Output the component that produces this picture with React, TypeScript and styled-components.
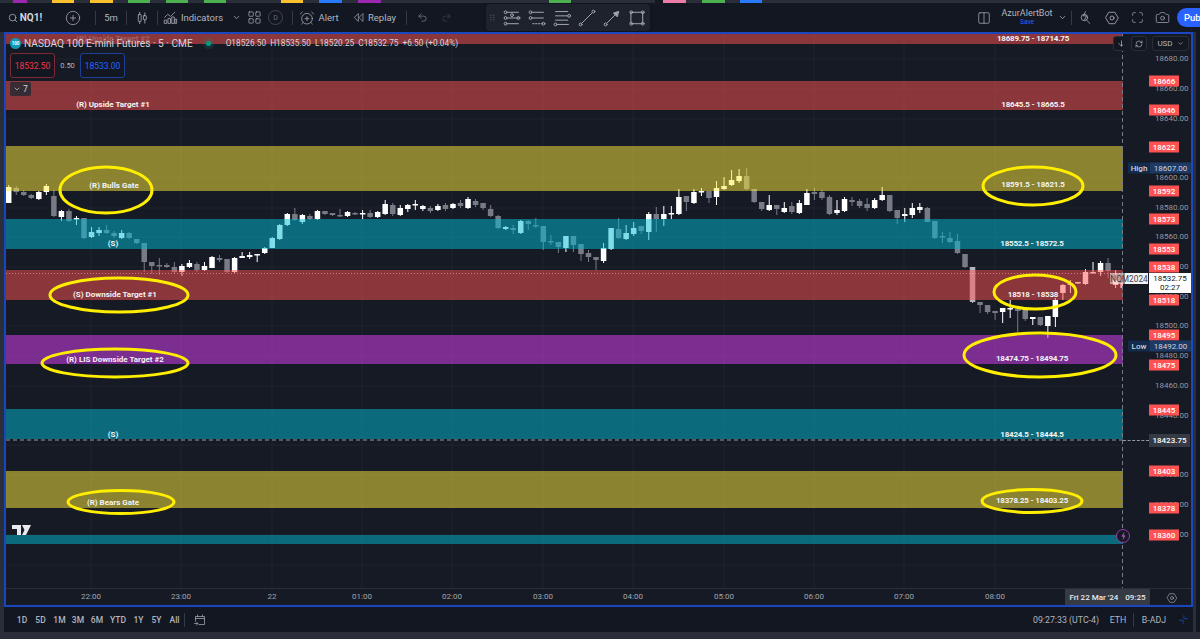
import React from "react";
import styled, { createGlobalStyle } from "styled-components";
import { Search, CirclePlus, LayoutGrid, AlarmClockPlus, Undo2, Redo2, ChevronDown, Maximize, Camera, Columns2, ArrowDown, RefreshCw } from "lucide-react";

const Global = createGlobalStyle`
  html, body { margin: 0; padding: 0; width: 1200px; height: 639px; overflow: hidden; background: #2a2e39; }
  * { box-sizing: border-box; }
  body { font-family: Roboto, "Liberation Sans", sans-serif; color: #d1d4dc; }
`;

const Page = styled.div`
  width: 1200px; height: 639px; display: flex; flex-direction: column; overflow: hidden; background: #2a2e39;
`;
const TabStrip = styled.div`display: flex; height: 3px; flex: none;`;
const TabMark = styled.div<{ $w: number; $c: string }>`
  width: ${p => p.$w}px; background: ${p => p.$c}; flex: none;
`;
const Toolbar = styled.header`
  position: relative; display: flex; align-items: center; height: 29px; flex: none; background: #131722; color: #b2b5be; overflow: hidden;
`;
const Cell = styled.div<{ $w: number; $gap?: number }>`
  width: ${p => p.$w}px; flex: none; height: 100%; display: flex; align-items: center; justify-content: center;
  gap: ${p => p.$gap ?? 3}px; color: #b2b5be; font-size: 9.5px;
`;
const Symbol = styled.span`color: #d1d4dc; font-size: 10px; font-weight: 700;`;
const Divider = styled.span`width: 1px; height: 14px; background: #363a45; flex: none;`;
const DayBadge = styled.span`
  width: 15px; height: 15px; border: 1px solid #434651; border-radius: 50%; font-size: 7px; color: #6a6d78;
  display: flex; align-items: center; justify-content: center;
`;
const Spring = styled.div`flex: 1;`;
const Floating = styled.div`
  position: absolute; left: 486px; top: 1px; width: 164px; height: 27px; background: #1e222d; border-radius: 4px;
  display: flex; align-items: center; padding-left: 2px; gap: 5px; box-shadow: 0 1px 4px rgba(0,0,0,.3); color: #a3a6af;
`;
const Account = styled.div`
  width: 54px; flex: none; display: flex; flex-direction: column; align-items: center; line-height: 1;
`;
const AccountName = styled.span`font-size: 9px; color: #b2b5be;`;
const AccountSave = styled.span`font-size: 6.5px; color: #2962ff; margin-top: 1px;`;
const Publish = styled.button`
  flex: none; width: 50px; height: 19px; margin: 0 -27px 0 3px; border: 0; padding: 0 0 0 7px; text-align: left; background: #2962ff; color: #fff;
  font: 500 9.5px Roboto, sans-serif; border-radius: 10px 0 0 10px;
`;

const Body = styled.div`display: flex; flex: none; height: 600px;`;
const MainCol = styled.div`margin-left: 4px; width: 1189px; flex: none; display: flex; flex-direction: column;`;
const Frame = styled.section`
  width: 1189px; height: 575px; flex: none; border: 2px solid #1a46c0; background: #161a25; display: flex; flex-direction: column;
`;
const ChartRow = styled.div`position: relative; display: flex; height: 554px; flex: none;`;
const Plot = styled.div`position: relative; width: 1117px; height: 554px; flex: none; overflow: hidden;`;
const ChartSvg = styled.svg`display: block;`;
const ZoneLabel = styled.span<{ $x: number; $y: number }>`
  position: absolute; left: ${p => p.$x - 6}px; top: ${p => p.$y - 34}px; transform: translate(-50%, -50%);
  font-size: 8px; font-weight: 700; color: #f2f3f5; white-space: nowrap; line-height: 1;
`;
const RangeLabel = styled(ZoneLabel)`letter-spacing: -0.2px;`;
const GhostLabel = styled(ZoneLabel)`color: rgba(255,255,255,.22);`;
const Legend = styled.div`
  position: absolute; left: 4px; top: 2px; display: flex; align-items: center; height: 14px; white-space: nowrap;
`;
const SymbolLogo = styled.span`
  width: 11px; height: 11px; border-radius: 50%; background: #1199b8; color: #fff; font-size: 4.5px; font-weight: 700;
  display: flex; align-items: center; justify-content: center; margin-right: 3px;
`;
const LegendTitle = styled.span`font-size: 10.15px; color: #d1d4dc;`;
const StatusDot = styled.span`
  width: 5px; height: 5px; border-radius: 50%; background: #089981; margin: 0 15px 0 13px; box-shadow: 0 0 0 3px rgba(8,153,129,.18);
`;
const Ohlc = styled.span`font-size: 8.3px; color: #d1d4dc; display: flex; gap: 4px;`;
const Ask = styled.div`
  position: absolute; left: 4px; top: 19px; display: flex; align-items: center;
`;
const QuoteBox = styled.span<{ $c: string; $b: string }>`
  width: 45px; height: 25px; border: 1px solid ${p => p.$b}; border-radius: 3px; color: ${p => p.$c}; font-size: 8.5px;
  display: flex; align-items: center; justify-content: center; background: #131722;
`;
const Spread = styled.span`width: 25px; text-align: center; font-size: 7.5px; color: #b2b5be;`;
const Collapse = styled.div`
  position: absolute; left: 4px; top: 48px; width: 21px; height: 14px; border-radius: 2px; background: #372c33;
  display: flex; align-items: center; justify-content: center; gap: 2px; font-size: 8.5px; color: #d1d4dc;
`;
const ChipBtn = styled.div<{ $x: number; $w: number }>`
  position: absolute; left: ${p => p.$x}px; top: 2px; width: ${p => p.$w}px; height: 15px; border: 1px solid #2a2e39; border-radius: 3px;
  display: flex; align-items: center; justify-content: center; gap: 4px; background: #131722; color: #b2b5be; font-size: 8px;
`;
const Axis = styled.aside`position: relative; flex: 1; height: 554px;`;
const Tick = styled.span<{ $y: number }>`
  position: absolute; left: 32px; top: ${p => p.$y - 34}px; transform: translateY(-50%); font-size: 8px; color: #9598a1; line-height: 1;
`;
const Tag = styled.span<{ $y: number }>`
  position: absolute; left: 26px; top: ${p => p.$y - 34}px; transform: translateY(-50%); width: 30px; height: 11px; background: #ff5252;
  color: #fff; font-size: 8px; display: flex; align-items: center; justify-content: center; font-weight: 500;
`;
const StatName = styled.span<{ $y: number }>`
  position: absolute; left: 5px; top: ${p => p.$y - 34}px; transform: translateY(-50%); width: 22px; height: 11px; background: #132b4d;
  color: #d1d4dc; font-size: 8px; display: flex; align-items: center; justify-content: center; font-weight: 500;
`;
const StatValue = styled.span<{ $y: number }>`
  position: absolute; left: 27px; top: ${p => p.$y - 34}px; transform: translateY(-50%); width: 41px; height: 11px; background: #1d3a66;
  color: #d1d4dc; font-size: 8px; display: flex; align-items: center; justify-content: center;
`;
const CrossTag = styled.span`
  position: absolute; left: 26px; top: 400px; width: 41px; height: 13px; background: #363a45; color: #fff; font-size: 8px;
  display: flex; align-items: center; justify-content: center; font-weight: 500;
`;
const CrossTail = styled.span`position: absolute; left: 0; top: 406px; width: 26px; border-top: 1px dashed #9598a1;`;
const PriceNow = styled.div`
  position: absolute; left: 26px; top: 239px; width: 42px; height: 20px; background: #fff; color: #131722; font-size: 8px;
  display: flex; flex-direction: column; align-items: center; justify-content: center; line-height: 9px;
`;
const ContractTag = styled.span`
  position: absolute; left: 1104px; top: 239px; width: 38px; height: 11px; color: #3f424c; font-size: 8.3px;
  background: linear-gradient(90deg, rgba(255,255,255,.5) 0 40%, rgba(255,255,255,.95) 40%);
  display: flex; align-items: center; justify-content: center;
`;
const BoltBadge = styled.svg`position: absolute; left: 1109px; top: 494px;`;
const TimeAxis = styled.div`
  position: relative; height: 17px; flex: none; border-top: 1px solid #2a2e39;
`;
const TimeLabel = styled.span<{ $x: number }>`
  position: absolute; left: ${p => p.$x - 6}px; top: 4px; transform: translateX(-50%); font-size: 8px; color: #a3a6af; line-height: 1;
`;
const DateBox = styled.span`
  position: absolute; left: 1059px; top: 0; width: 85px; height: 16px; background: #363a45; color: #e8e9ec; font-size: 8px; font-weight: 500;
  display: flex; align-items: center; justify-content: center; gap: 7px;
`;
const AxisGear = styled.span`position: absolute; left: 1160px; top: 3px; display: flex; color: #b2b5be;`;

const BottomBar = styled.footer`
  height: 25px; flex: none; background: #131722; display: flex; align-items: center; padding-left: 9px; color: #b2b5be; font-size: 8.5px;
`;
const Range = styled.span<{ $w: number }>`width: ${p => p.$w}px; flex: none; text-align: center; font-weight: 500;`;
const BarText = styled.span<{ $w: number }>`width: ${p => p.$w}px; flex: none; text-align: center; font-size: 8.8px;`;
const SideRail = styled.div`margin-left: 3px; flex: 1; background: #131722;`;
const FootPanel = styled.div`margin: 2px 0 0 0; flex: 1; background: #131722;`;

const GOLD = "#ffee00";

const tabs: [number, string][] = [[13,"#2a2e39"],[14,"#9c27b0"],[25,"#2a2e39"],[22,"#fbc02d"],[16,"#2a2e39"],[23,"#fbc02d"],[15,"#2a2e39"],[22,"#4caf50"],[16,"#2a2e39"],[22,"#4caf50"],[16,"#2a2e39"],[22,"#4caf50"],[55,"#2a2e39"],[22,"#fbc02d"],[16,"#2a2e39"],[23,"#2979ff"],[16,"#2a2e39"],[23,"#9c27b0"],[168,"#2a2e39"],[22,"#4caf50"],[84,"#2a2e39"],[8,"#131722"],[23,"#ec7ba8"],[16,"#2a2e39"],[23,"#4caf50"],[15,"#2a2e39"],[22,"#2979ff"],[438,"#2a2e39"]];

const zones: [number, number, string][] = [
  [33,44,"#ff5252"],[81,110,"#ff5252"],[146,191,"#ffeb3b"],[219,249,"#00bcd4"],[270,300,"#ff5252"],
  [335,364,"#e040fb"],[409,439,"#00bcd4"],[471,508,"#ffeb3b"],[535,544,"#00bcd4"],
];
const rings: [number, number, number, number][] = [
  [106,190,46,23],[119,295,69,17],[115,363,73,14],[121,502,53,11.5],[1033,186,50,19],[1035,292,41,17],[1040,355,76,22],[1032,501,50,11.5],
];

// top, bottom, wickTop, wickBottom, kind (1 white, 0 grey)
const candles: [number, number, number, number, number][] = [
[187,203,185,203,1],[188,192,186,195,0],[192,195,190,196,0],[195,198,194,199,0],[192,199,191,200,1],[186,192,184,195,1],[196,216,190,217,0],[211,217,210,221,1],[211,221,209,222,0],[218,219,216,225,1],
[218,238,218,239,0],[232,237,227,238,1],[230,233,227,236,1],[230,233,225,234,0],[233,236,231,238,0],[233,238,230,239,1],[233,238,232,239,0],[239,243,239,244,0],[243,262,243,272,0],[262,266,262,274,0],
[265,266,258,275,0],[265,267,263,268,0],[267,272,262,274,0],[266,272,264,276,1],[263,267,260,268,1],[264,270,262,272,0],[266,270,262,271,1],[257,268,256,268,1],[258,260,255,262,0],[259,272,259,273,0],
[258,272,257,273,1],[256,258,252,258,1],[255,257,252,259,1],[254,255,254,262,1],[248,253,247,254,1],[238,248,237,248,1],[225,239,224,240,1],[214,225,213,226,1],[214,220,208,221,0],[215,222,214,224,1],
[216,219,214,220,0],[211,219,210,220,1],[211,214,211,215,0],[213,215,213,216,0],[215,216,209,217,0],[212,216,211,217,1],[213,214,212,215,0],[213,214,210,219,1],[213,217,210,218,0],[212,217,211,218,1],
[204,214,200,215,1],[205,214,203,216,0],[208,215,205,216,1],[205,209,204,212,1],[204,205,200,210,1],[206,209,205,211,1],[208,211,206,213,0],[206,210,204,211,1],[205,209,203,211,0],[204,208,203,209,1],
[203,206,200,208,0],[199,208,197,209,1],[201,205,199,207,0],[203,208,203,210,0],[209,216,205,217,0],[216,228,215,229,0],[227,229,226,230,1],[228,230,225,234,0],[221,233,220,234,1],[221,224,220,230,0],
[225,226,218,228,0],[226,242,226,250,0],[241,242,235,245,0],[242,247,242,253,0],[236,248,236,252,1],[236,245,236,252,0],[244,254,244,261,0],[253,257,250,262,0],[257,260,257,270,0],[248,261,243,263,1],
[228,249,228,250,1],[229,238,218,239,0],[233,239,225,240,1],[228,234,222,236,1],[226,231,226,234,0],[214,232,212,240,1],[214,219,207,232,0],[214,219,206,226,1],[213,214,206,219,1],[197,214,189,215,1],
[196,202,196,211,0],[192,203,189,204,1],[191,192,188,196,1],[191,198,191,203,0],[188,197,181,205,1],[186,189,177,190,1],[180,185,170,186,1],[176,181,169,183,1],[176,189,168,190,0],[189,202,189,203,0],
[202,209,202,211,0],[205,210,195,211,1],[205,209,205,215,0],[208,212,202,213,1],[206,212,202,214,0],[203,213,200,214,1],[193,205,189,205,1],[192,194,188,200,0],[192,198,190,200,0],[197,214,195,215,0],
[210,213,200,215,1],[199,211,197,212,1],[200,202,197,206,0],[201,206,199,208,0],[204,208,198,211,0],[200,208,198,209,1],[195,200,187,201,1],[195,211,195,212,0],[210,218,210,224,0],[214,216,208,222,1],
[208,215,203,218,1],[207,210,203,213,1],[208,222,207,222,0],[221,238,221,239,0],[236,237,232,243,0],[238,242,232,243,0],[241,253,234,254,0],[254,267,254,268,0],[267,302,267,303,2],[302,305,302,313,0],
[305,312,305,314,0],[311,313,311,320,0],[308,312,308,323,1],[308,309,300,318,1],[309,311,309,332,0],[310,319,310,321,0],[317,319,317,325,1],[317,325,317,326,0],[316,326,316,338,1],[300,317,298,327,1],
[285,293,284,300,1],[283,285,280,293,1],[282,283,282,284,1],[272,284,269,285,1],[272,273,262,273,1],[263,272,261,276,1],[263,271,258,278,0],[280,285,270,288,1],[282,288,280,290,1],
];
const candleFill = ["#787b86", "#ffffff", "#b2b5be"];

const priceTicks: [number, string][] = [[59,"18680.00"],[89,"18660.00"],[119,"18640.00"],[178,"18600.00"],[208,"18580.00"],[237,"18560.00"],[267,"18540.00"],[297,"18520.00"],[326,"18500.00"],[356,"18480.00"],[386,"18460.00"],[416,"18440.00"],[445,"18420.00"],[475,"18400.00"],[505,"18380.00"],[535,"18360.00"]];
const redTags: [number, string][] = [[81,"18666"],[110,"18646"],[147,"18622"],[191,"18592"],[219,"18573"],[249,"18553"],[267,"18538"],[300,"18518"],[335,"18495"],[365,"18475"],[410,"18445"],[471,"18403"],[508,"18378"],[535,"18360"]];
const times: [number, string][] = [[91,"22:00"],[181,"23:00"],[272,"22"],[362,"01:00"],[452,"02:00"],[543,"03:00"],[633,"04:00"],[724,"05:00"],[814,"06:00"],[904,"07:00"],[995,"08:00"]];
const gridY = [59,89,119,149,178,208,237,267,297,326,356,386,416,445,475,505,535,565];
const gridX = times.map(t => t[0]);
const leftLabels: [number, number, string][] = [[113,105,"(R) Upside Target #1"],[114,186,"(R) Bulls Gate"],[113,244,"(S)"],[115,295,"(S) Downside Target #1"],[115,360,"(R) LIS Downside Target #2"],[113,435,"(S)"],[113,503,"(R) Bears Gate"]];
const rightLabels: [number, number, string][] = [[1033,39,"18689.75 - 18714.75"],[1033,105,"18645.5 - 18665.5"],[1033,185,"18591.5 - 18621.5"],[1032,244,"18552.5 - 18572.5"],[1033,295,"18518 - 18538"],[1032,359,"18474.75 - 18494.75"],[1032,435,"18424.5 - 18444.5"],[1032,501,"18378.25 - 18403.25"]];

const Ico: React.FC<{ s?: number; children: React.ReactNode }> = ({ s = 16, children }) => (
  <svg width={s} height={s} viewBox="0 0 28 28" fill="none" stroke="currentColor" strokeWidth="1.4" strokeLinecap="round" strokeLinejoin="round">{children}</svg>
);

const HexGear: React.FC<{ s?: number }> = ({ s = 15 }) => (
  <Ico s={s}><path d="M9 4h10l6 10-6 10H9L3 14z" /><circle cx="14" cy="14" r="3.5" /></Ico>
);

const DrawDot: React.FC<{ x: number; y: number }> = ({ x, y }) => <circle cx={x} cy={y} r="2" />;

export default function App() {
  return (
    <Page>
      <Global />
      <TabStrip>{tabs.map(([w, c], i) => <TabMark key={i} $w={w} $c={c} />)}</TabStrip>
      <Toolbar>
        <Cell $w={50} $gap={2}><Search size={10} strokeWidth={1.8} /><Symbol>NQ1!</Symbol></Cell>
        <Cell $w={45}><CirclePlus size={16} strokeWidth={1.1} /></Cell>
        <Divider />
        <Cell $w={30}>5m</Cell>
        <Divider />
        <Cell $w={30}>
          <Ico s={16}><path d="M10 4v20M19 5v18" /><rect x="7.5" y="8" width="5" height="12" rx="1" fill="#131722" /><rect x="16.5" y="10" width="5" height="7" rx="1" fill="#131722" /></Ico>
        </Cell>
        <Divider />
        <Cell $w={70}>
          <Ico s={15}><path d="M3 14l6-6 5 4 8-8" /><rect x="3" y="19" width="4" height="6" /><rect x="10" y="16" width="4" height="9" /><rect x="17" y="13" width="4" height="12" /><rect x="23" y="17" width="2.5" height="8" /></Ico>
          <span>Indicators</span>
        </Cell>
        <Cell $w={16}><ChevronDown size={9} /></Cell>
        <Cell $w={21}><LayoutGrid size={15} strokeWidth={1.1} /></Cell>
        <Cell $w={21}><DayBadge>D</DayBadge></Cell>
        <Cell $w={6} />
        <Divider />
        <Cell $w={52}><AlarmClockPlus size={16} strokeWidth={1.1} /><span>Alert</span></Cell>
        <Cell $w={58}>
          <Ico s={13}><path d="M13 6L5 14l8 8zM23 6l-8 8 8 8z" /></Ico>
          <span>Replay</span>
        </Cell>
        <Cell $w={3} />
        <Divider />
        <Cell $w={30}><Undo2 size={11} color="#6a6d78" /></Cell>
        <Cell $w={18}><Redo2 size={11} color="#363a45" /></Cell>
        <Spring />
        <Floating>
          <Ico s={9}><g fill="#50535e" stroke="none"><circle cx="9" cy="7" r="2" /><circle cx="18" cy="7" r="2" /><circle cx="9" cy="14" r="2" /><circle cx="18" cy="14" r="2" /><circle cx="9" cy="21" r="2" /><circle cx="18" cy="21" r="2" /></g></Ico>
          <Ico s={20}><path d="M8 6h15M8 14h15M8 22h15" /><DrawDot x={5} y={6} /><DrawDot x={5} y={22} /><DrawDot x={5} y={14} /><DrawDot x={14} y={10} /><DrawDot x={23} y={14} /></Ico>
          <Ico s={20}><path d="M8 6h15M8 14h15" /><path d="M8 22h15" strokeDasharray="2 2" /><DrawDot x={5} y={6} /><DrawDot x={5} y={14} /><DrawDot x={23} y={22} /></Ico>
          <Ico s={20}><path d="M5 5h17M5 11h17M5 17h17M8 23h15" /><DrawDot x={24} y={11} /><DrawDot x={5} y={23} /></Ico>
          <Ico s={20}><path d="M7 21L21 7" /><DrawDot x={5} y={23} /><DrawDot x={23} y={5} /></Ico>
          <Ico s={20}><path d="M7 21L19 9" /><path d="M23 5l-7 2 5 5z" fill="currentColor" /><DrawDot x={5} y={23} /></Ico>
          <Ico s={20}><rect x="6" y="6" width="16" height="16" /><DrawDot x={6} y={6} /><DrawDot x={22} y={6} /><DrawDot x={6} y={22} /><DrawDot x={22} y={22} /></Ico>
        </Floating>
        <Cell $w={20}><Columns2 size={14} strokeWidth={1.2} /></Cell>
        <Cell $w={6} />
        <Account><AccountName>AzurAlertBot</AccountName><AccountSave>Save</AccountSave></Account>
        <Cell $w={17}><ChevronDown size={9} /></Cell>
        <Divider />
        <Cell $w={27}>
          <Ico s={15}><circle cx="12" cy="14" r="6" /><path d="M16 19l6 6M14 3l-4 8h6l-4 8" /></Ico>
        </Cell>
        <Cell $w={25}><HexGear s={16} /></Cell>
        <Cell $w={26}><Maximize size={13} strokeWidth={1.2} /></Cell>
        <Cell $w={24}><Camera size={15} strokeWidth={1.1} /></Cell>
        <Publish>Publish</Publish>
      </Toolbar>

      <Body>
        <MainCol>
          <Frame>
            <ChartRow>
              <Plot>
                <ChartSvg width={1117} height={554} viewBox="6 34 1117 554">
                  {gridX.map(x => <line key={x} x1={x} x2={x} y1={34} y2={588} stroke="#1e222c" />)}
                  {gridY.map(y => <line key={y} x1={6} x2={1123} y1={y} y2={y} stroke="#1e222c" />)}
                  {candles.map(([t, b, wt, wb, k], i) => {
                    const x = 8.7 + i * 7.53;
                    return (
                      <g key={i} fill={candleFill[k]} stroke="none">
                        <rect x={x - 0.5} y={wt} width={1} height={wb - wt} />
                        <rect x={x - 2.75} y={t} width={5.5} height={Math.max(b - t, 1.5)} />
                      </g>
                    );
                  })}
                  {zones.map(([a, b, c]) => <rect key={a} x={6} y={a} width={1117} height={b - a} fill={c} fillOpacity={0.5} />)}
                  <line x1={6} x2={1123} y1={273.5} y2={273.5} stroke="#ffb4b4" strokeOpacity={0.55} strokeDasharray="1 2" />
                  <line x1={6} x2={1123} y1={440} y2={440} stroke="#9598a1" strokeDasharray="4 3" />
                  <line x1={1122.5} x2={1122.5} y1={34} y2={588} stroke="#787b86" strokeDasharray="4 3" />
                  <path d="M12 525h9v10h-4v-6h-5zM22 525h9l-5 10h-4l2.5-5z" fill="#e8e9ec" />
                  {rings.map(([cx, cy, rx, ry]) => <ellipse key={cx + cy} cx={cx} cy={cy} rx={rx} ry={ry} fill="none" stroke={GOLD} strokeWidth={3} />)}
                </ChartSvg>
                <GhostLabel $x={113} $y={39}>(R) Upside Target #2</GhostLabel>
                {leftLabels.map(([x, y, t]) => <ZoneLabel key={t + y} $x={x} $y={y}>{t}</ZoneLabel>)}
                {rightLabels.map(([x, y, t]) => <RangeLabel key={t} $x={x} $y={y}>{t}</RangeLabel>)}
                <Legend>
                  <SymbolLogo>100</SymbolLogo>
                  <LegendTitle>NASDAQ 100 E-mini Futures · 5 · CME</LegendTitle>
                  <StatusDot />
                  <Ohlc>
                    <span>O18526.50</span><span>H18535.50</span><span>L18520.25</span><span>C18532.75</span><span>+6.50 (+0.04%)</span>
                  </Ohlc>
                </Legend>
                <Ask>
                  <QuoteBox $c="#f23645" $b="#7d2a35">18532.50</QuoteBox>
                  <Spread>0.50</Spread>
                  <QuoteBox $c="#2962ff" $b="#1e3f96">18533.00</QuoteBox>
                </Ask>
                <Collapse><ChevronDown size={8} /><span>7</span></Collapse>
                <ChipBtn $x={1107} $w={16}><ArrowDown size={9} /></ChipBtn>
              </Plot>
              <Axis>
                {priceTicks.map(([y, t]) => <Tick key={t} $y={y}>{t}</Tick>)}
                {redTags.map(([y, t]) => <Tag key={t} $y={y}>{t}</Tag>)}
                <StatName $y={168}>High</StatName><StatValue $y={168}>18607.00</StatValue>
                <StatName $y={346}>Low</StatName><StatValue $y={346}>18492.00</StatValue>
                <CrossTail />
                <CrossTag>18423.75</CrossTag>
                <PriceNow><span>18532.75</span><span>02:27</span></PriceNow>
              </Axis>
              <ChipBtn $x={1125} $w={16}><RefreshCw size={8} /></ChipBtn>
              <ChipBtn $x={1146} $w={37}><span>USD</span><ChevronDown size={7} /></ChipBtn>
              <ContractTag>NQM2024</ContractTag>
              <BoltBadge width={16} height={16} viewBox="0 0 16 16">
                <circle cx={8} cy={8} r={6.5} fill="#161a25" stroke="#9c3bb0" strokeWidth={1} />
                <path d="M9.5 3.5l-3 5h2l-1 4 3-5h-2z" fill="#c05ad0" />
              </BoltBadge>
            </ChartRow>
            <TimeAxis>
              {times.map(([x, t]) => <TimeLabel key={t} $x={x}>{t}</TimeLabel>)}
              <DateBox><span>Fri 22 Mar '24</span><span>09:25</span></DateBox>
              <AxisGear><HexGear s={12} /></AxisGear>
            </TimeAxis>
          </Frame>
          <BottomBar>
            {([["1D",18],["5D",19],["1M",19],["3M",18],["6M",20],["YTD",22],["1Y",19],["5Y",17],["All",19]] as [string, number][]).map(([t, w]) => <Range key={t} $w={w}>{t}</Range>)}
            <Divider />
            <Cell $w={30}>
              <Ico s={14}><path d="M5 16V7h18v16H12M5 11h18M9 4v3M19 4v3M3 21h6M7 18l3 3-3 3" /></Ico>
            </Cell>
            <Spring />
            <BarText $w={74}>09:27:33 (UTC-4)</BarText>
            <BarText $w={30}>ETH</BarText>
            <Divider />
            <BarText $w={40}>B-ADJ</BarText>
            <Cell $w={19}>
              <Ico s={11}><path d="M15 4v8h9M4 16h9v8" stroke="#2962ff" /></Ico>
            </Cell>
          </BottomBar>
          <FootPanel />
        </MainCol>
        <SideRail />
      </Body>
    </Page>
  );
}
